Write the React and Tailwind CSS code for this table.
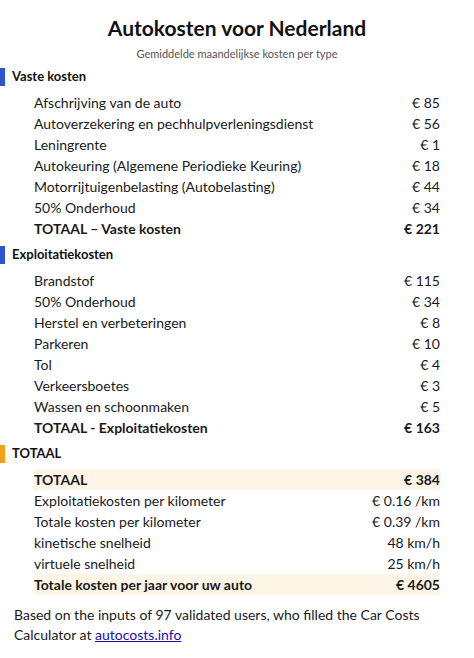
import React from "react";

const vaste = [
    ["Afschrijving van de auto", "€ 85"],
    ["Autoverzekering en pechhulpverleningsdienst", "€ 56"],
    ["Leningrente", "€ 1"],
    ["Autokeuring (Algemene Periodieke Keuring)", "€ 18"],
    ["Motorrijtuigenbelasting (Autobelasting)", "€ 44"],
    ["50% Onderhoud", "€ 34"],
];

const exploitatie = [
    ["Brandstof", "€ 115"],
    ["50% Onderhoud", "€ 34"],
    ["Herstel en verbeteringen", "€ 8"],
    ["Parkeren", "€ 10"],
    ["Tol", "€ 4"],
    ["Verkeersboetes", "€ 3"],
    ["Wassen en schoonmaken", "€ 5"],
];

function Header({ label, bar }) {
    return (
        <div className="flex items-center h-[18px] mt-[7px] mb-[6px]">
            <span className={`w-[5px] h-[18px] ${bar}`} />
            <span className="ml-[7px] text-[13px] font-bold text-[#111]">{label}</span>
        </div>
    );
}

function Row({ label, value, bold, hl }) {
    return (
        <div className={`flex justify-between items-center h-[21px] ml-[34px] mr-[34px] ${hl ? "bg-[#fdf5e6]" : ""} ${bold ? "font-bold" : ""}`}>
            <span>{label}</span>
            <span>{value}</span>
        </div>
    );
}

export default function App() {
    return (
        <div className="w-[474px] h-[658px] bg-white text-[#1a1a1a] text-[14px]" style={{ fontFamily: "Lato, 'Open Sans', sans-serif" }}>
            <div className="pt-[15px] text-center">
                <h1 className="text-[21px] font-bold leading-[26px] text-[#111]">Autokosten voor Nederland</h1>
                <p className="text-[11px] text-[#555] mt-[6px] leading-[14px]">Gemiddelde maandelijkse kosten per type</p>
            </div>
            <Header label="Vaste kosten" bar="bg-[#2f55c8]" />
            {vaste.map(([l, v]) => <Row key={l} label={l} value={v} />)}
            <Row label="TOTAAL – Vaste kosten" value="€ 221" bold />
            <Header label="Exploitatiekosten" bar="bg-[#2f55c8]" />
            {exploitatie.map(([l, v]) => <Row key={l} label={l} value={v} />)}
            <Row label="TOTAAL - Exploitatiekosten" value="€ 163" bold />
            <Header label="TOTAAL" bar="bg-[#f0a21e]" />
            <Row label="TOTAAL" value="€ 384" bold hl />
            <Row label="Exploitatiekosten per kilometer" value="€ 0.16 /km" />
            <Row label="Totale kosten per kilometer" value="€ 0.39 /km" />
            <Row label="kinetische snelheid" value="48 km/h" />
            <Row label="virtuele snelheid" value="25 km/h" />
            <Row label="Totale kosten per jaar voor uw auto" value="€ 4605" bold hl />
            <p className="mx-[14px] mt-[10px] leading-[20px]">
                Based on the inputs of 97 validated users, who filled the Car Costs Calculator at{" "}
                <a href="#" className="text-[#1a0dab] underline">autocosts.info</a>
            </p>
        </div>
    );
}
